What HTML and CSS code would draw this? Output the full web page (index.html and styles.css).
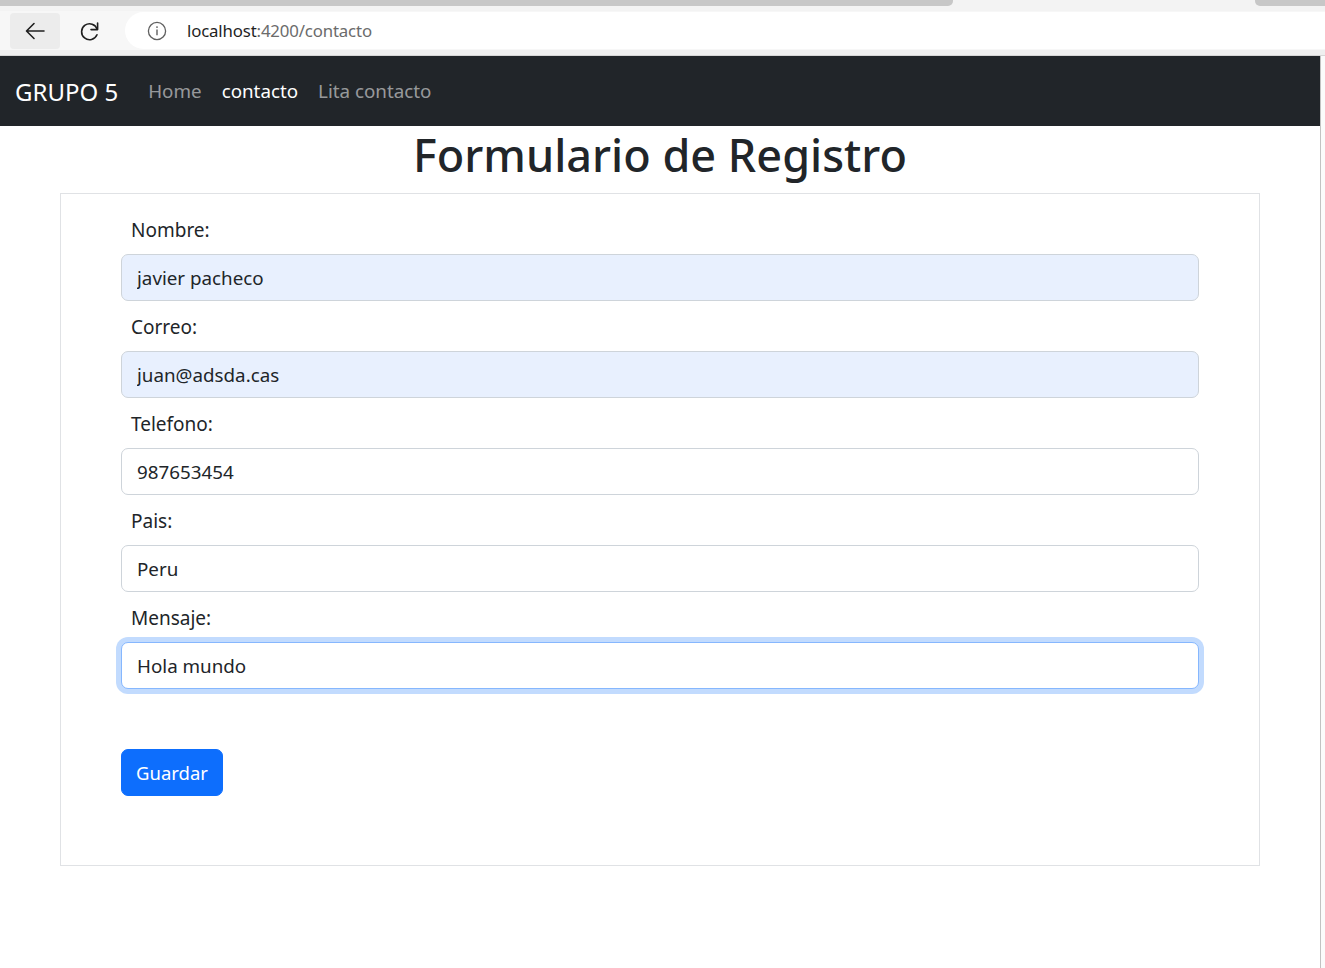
FILE: index.html
```html
<!DOCTYPE html>
<html lang="es">
<head>
<meta charset="utf-8">
<title>contacto</title>
<link rel="stylesheet" href="styles.css">
</head>
<body>
<div class="browser">
  <div class="tabstrip">
    <div class="tab-left"></div>
    <div class="tab-gap"></div>
    <div class="tab-right"></div>
  </div>
  <div class="toolbar">
    <div class="tb-btn back">
      <svg width="22" height="22" viewBox="0 0 22 22"><path d="M20 11H3M10 3.5L2.5 11 10 18.5" fill="none" stroke="#1f1f1f" stroke-width="1.6" stroke-linecap="round" stroke-linejoin="round"/></svg>
    </div>
    <div class="tb-btn reload">
      <svg width="22" height="22" viewBox="0 0 22 22"><path d="M18.2 9.2A8 8 0 1 0 18 14.8" fill="none" stroke="#1f1f1f" stroke-width="1.6" stroke-linecap="round"/><path d="M18.6 3v6.6H12" fill="none" stroke="#1f1f1f" stroke-width="1.6" stroke-linecap="round" stroke-linejoin="round"/></svg>
    </div>
    <div class="omnibox">
      <svg class="info" width="20" height="20" viewBox="0 0 20 20"><circle cx="10" cy="10" r="8.6" fill="none" stroke="#5f5f5f" stroke-width="1.3"/><path d="M10 8.6v5.6" stroke="#5f5f5f" stroke-width="1.4"/><circle cx="10" cy="6.1" r="0.9" fill="#5f5f5f"/></svg>
      <span class="url"><span class="host">localhost</span>:4200/contacto</span>
    </div>
  </div>
  <div class="toolbar-sep"></div>
</div>
<div class="viewport">
  <div class="page">
    <nav class="navbar">
      <a class="brand">GRUPO 5</a>
      <ul class="nav">
        <li><a class="nav-link">Home</a></li>
        <li><a class="nav-link active">contacto</a></li>
        <li><a class="nav-link">Lita contacto</a></li>
      </ul>
    </nav>
    <h1 class="title">Formulario de Registro</h1>
    <form class="card">
      <div class="field">
        <label class="label">Nombre:</label>
        <input class="control autofill" type="text" value="javier pacheco">
      </div>
      <div class="field">
        <label class="label">Correo:</label>
        <input class="control autofill" type="text" value="juan@adsda.cas">
      </div>
      <div class="field">
        <label class="label">Telefono:</label>
        <input class="control" type="text" value="987653454">
      </div>
      <div class="field">
        <label class="label">Pais:</label>
        <input class="control" type="text" value="Peru">
      </div>
      <div class="field">
        <label class="label">Mensaje:</label>
        <input class="control focused" type="text" value="Hola mundo">
      </div>
      <button class="btn-primary" type="button">Guardar</button>
    </form>
  </div>
  <div class="side-strip"></div>
</div>
</body>
</html>
```

FILE: styles.css
```css
* { box-sizing: border-box; }
html, body { margin: 0; padding: 0; }
body {
  width: 1325px;
  height: 968px;
  overflow: hidden;
  background: #ffffff;
  font-family: "Noto Sans", "Open Sans", sans-serif;
  color: #212529;
}

/* browser chrome */
.browser { background: #f7f7f7; }
.tabstrip {
  height: 11px;
  display: flex;
  background: #f3f3f3;
}
.tab-left {
  width: 953px;
  height: 6px;
  background: #c7c7c7;
  border-bottom-right-radius: 5px;
}
.tab-gap { flex: 1; }
.tab-right {
  width: 70px;
  height: 6px;
  background: #c7c7c7;
  border-bottom-left-radius: 5px;
}
.toolbar {
  height: 39px;
  display: flex;
  align-items: center;
  padding-left: 10px;
  background: #f7f7f7;
}
.tb-btn {
  height: 36px;
  display: flex;
  align-items: center;
  justify-content: center;
  border-radius: 4px;
}
.tb-btn.back { width: 50px; background: #ececec; }
.tb-btn.reload { width: 40px; margin-left: 10px; }
.omnibox {
  flex: 1;
  height: 37px;
  margin-left: 15px;
  background: #ffffff;
  border-radius: 19px 0 0 19px;
  display: flex;
  align-items: center;
  padding-left: 22px;
}
.info { flex: none; }
.url {
  margin-left: 20px;
  font-family: "Noto Sans", sans-serif;
  font-size: 16.8px;
  color: #6b6b6b;
  letter-spacing: -0.15px;
}
.url .host { color: #1f1f1f; }
.toolbar-sep {
  height: 6px;
  background: #efefef;
  border-bottom: 1px solid #d6d6d6;
}

/* viewport */
.viewport {
  display: flex;
  height: 912px;
}
.page {
  width: 1320px;
  background: #ffffff;
}
.side-strip {
  flex: 1;
  border-left: 1px solid #c2c2c2;
  background: #fbfbfb;
}

/* navbar */
.navbar {
  height: 70px;
  background: #212529;
  display: flex;
  align-items: center;
  padding: 0 15px;
}
.brand {
  color: #ffffff;
  font-size: 24px;
  margin-right: 20px;
  line-height: 37px;
}
.nav {
  list-style: none;
  margin: 0;
  padding: 0;
  display: flex;
}
.nav-link {
  display: block;
  padding: 0 10px;
  font-size: 18.8px;
  line-height: 30px;
  color: rgba(255, 255, 255, 0.55);
}
.nav-link.active { color: #ffffff; }

/* title */
.title {
  margin: 0 0 10px;
  text-align: center;
  font-size: 45px;
  line-height: 57px;
  font-weight: 500;
  color: #212529;
}

/* form card */
.card {
  margin: 0 60px;
  border: 1px solid #e0e2e5;
  padding: 20px 60px 69px;
}
.field { margin-bottom: 10px; }
.label {
  display: block;
  margin: 0 0 10px 10px;
  font-size: 19px;
  line-height: 30px;
  padding-top: 1px;
}
.control {
  display: block;
  width: 100%;
  height: 47px;
  margin: 0;
  padding: 0 15px;
  font-family: inherit;
  font-size: 18.8px;
  color: #212529;
  background: #ffffff;
  border: 1px solid #ced4da;
  border-radius: 7px;
  outline: none;
}
.control.autofill { background: #e8f0fe; }
.control.focused {
  border-color: #86b7fe;
  box-shadow: 0 0 0 5px rgba(13, 110, 253, 0.25);
}
.label + .control { margin-top: -1px; }
.btn-primary {
  display: block;
  margin-top: 60px;
  height: 47px;
  padding: 0 14px;
  font-family: inherit;
  font-size: 18.5px;
  color: #ffffff;
  background: #0d6efd;
  border: 1px solid #0d6efd;
  border-radius: 7px;
}
```
